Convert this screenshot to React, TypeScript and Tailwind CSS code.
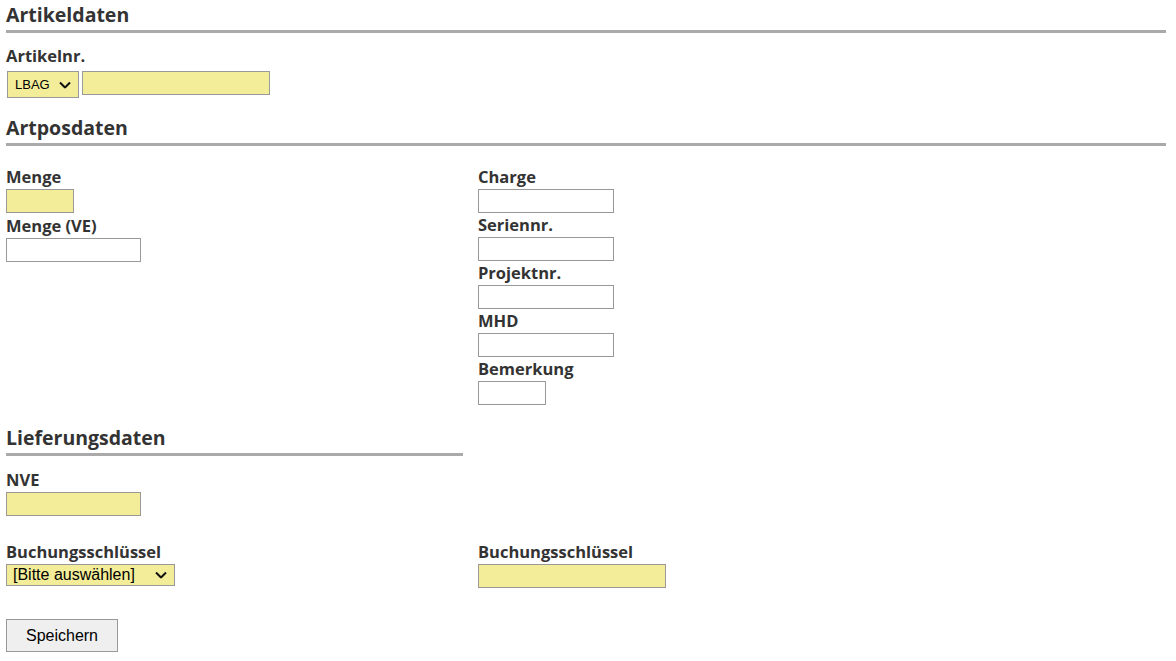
import React from 'react';

const yellow = 'bg-[#f3ed9a]';

const SectionTitle: React.FC<{ title: string; className?: string }> = ({ title, className = '' }) => (
  <h2
    className={`h-[33px] border-b-[3px] border-[#aaaaaa] text-[19.5px] leading-[30px] font-bold text-[#333] ${className}`}
  >
    {title}
  </h2>
);

const Label: React.FC<{ children: React.ReactNode; className?: string }> = ({ children, className = '' }) => (
  <label className={`block h-[24px] text-[16.5px] leading-[24px] font-bold text-[#333] ${className}`}>{children}</label>
);

const Field: React.FC<{ label: string; inputClass: string }> = ({ label, inputClass }) => (
  <div>
    <Label>{label}</Label>
    <input type="text" className={`block h-[24px] border border-[#999] ${inputClass}`} />
  </div>
);

const Chevron: React.FC = () => (
  <svg width="12" height="7" viewBox="0 0 12 7" className="pointer-events-none absolute right-[8px] top-1/2 -translate-y-1/2">
    <path d="M1 1 L6 6 L11 1" fill="none" stroke="#111" strokeWidth="2" />
  </svg>
);

const Select: React.FC<{ value: string; className: string; wrapClass?: string }> = ({ value, className, wrapClass = '' }) => (
  <div className={`relative ${wrapClass}`}>
    <select
      className={`block appearance-none border border-[#999] ${yellow} font-['Liberation_Sans',Arial,sans-serif] text-black ${className}`}
    >
      <option>{value}</option>
    </select>
    <Chevron />
  </div>
);

const App: React.FC = () => {
  return (
    <div className="min-h-screen bg-white pl-[6px] pr-[10px] font-['Open_Sans',sans-serif]">
      <SectionTitle title="Artikeldaten" />

      <Label className="mt-[11px]">Artikelnr.</Label>
      <div className="mt-[3px] flex items-start gap-[3px]">
        <Select value="LBAG" wrapClass="ml-px" className="h-[27px] w-[72px] pl-[7px] text-[13px]" />
        <input type="text" className={`h-[24px] w-[188px] border border-[#999] ${yellow}`} />
      </div>

      <SectionTitle title="Artposdaten" className="mt-[15px]" />

      <div className="mt-[19px] flex">
        <div className="flex w-[472px] flex-col gap-px">
          <Field label="Menge" inputClass={`w-[68px] ${yellow}`} />
          <Field label="Menge (VE)" inputClass="w-[135px] bg-white" />
        </div>
        <div className="flex flex-col">
          <Field label="Charge" inputClass="w-[136px] bg-white" />
          <Field label="Seriennr." inputClass="w-[136px] bg-white" />
          <Field label="Projektnr." inputClass="w-[136px] bg-white" />
          <Field label="MHD" inputClass="w-[136px] bg-white" />
          <Field label="Bemerkung" inputClass="w-[68px] bg-white" />
        </div>
      </div>

      <SectionTitle title="Lieferungsdaten" className="mt-[18px] w-[457px]" />

      <div className="mt-[12px]">
        <Field label="NVE" inputClass={`w-[135px] ${yellow}`} />
      </div>

      <div className="mt-[24px] flex">
        <div className="w-[472px]">
          <Label>Buchungsschlüssel</Label>
          <Select value="[Bitte auswählen]" wrapClass="w-[169px]" className="h-[22px] w-[169px] pl-[6px] text-[16px] leading-[20px]" />
        </div>
        <Field label="Buchungsschlüssel" inputClass={`w-[188px] ${yellow}`} />
      </div>

      <button
        type="button"
        className="mt-[31px] h-[33px] w-[112px] border border-[#999] bg-[#efefef] font-['Liberation_Sans',Arial,sans-serif] text-[16px] text-black"
      >
        Speichern
      </button>
    </div>
  );
};

export default App;
